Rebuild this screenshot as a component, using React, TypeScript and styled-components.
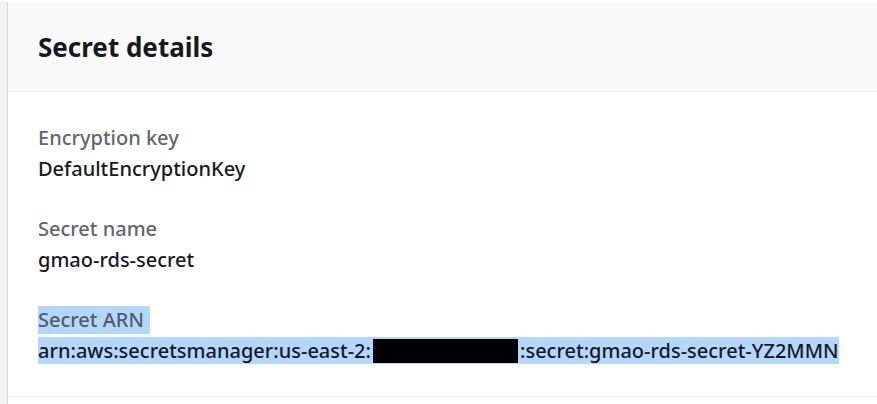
import React from "react";
import styled, { createGlobalStyle } from "styled-components";

const GlobalStyle = createGlobalStyle`
  *, *::before, *::after { box-sizing: border-box; }
  body {
    margin: 0;
    background: #ffffff;
    font-family: "Noto Sans", "Open Sans", sans-serif;
    color: #16191f;
    overflow: hidden;
  }
`;

const Page = styled.main`
  display: flex;
  min-height: 100vh;
  padding-top: 2px;
`;

const Gutter = styled.div`
  flex: 0 0 7px;
  background: #f2f3f3;
`;

const Panel = styled.section`
  flex: 1;
  min-width: 0;
  border-left: 1px solid #d5d9d9;
  background: #ffffff;
`;

const PanelHeader = styled.header`
  padding: 29px 30px 28px;
  background: #fafafa;
  border-bottom: 1px solid #e9ebeb;
`;

const Title = styled.h2`
  margin: 0;
  font-size: 26px;
  line-height: 32px;
  font-weight: 700;
`;

const Details = styled.dl`
  display: flex;
  flex-direction: column;
  gap: 33px;
  margin: 0;
  padding: 32px 30px;
  border-bottom: 1px solid #e9ebeb;
`;

const Field = styled.div`
  display: flex;
  flex-direction: column;
  align-items: flex-start;
  gap: 3px;
`;

const Label = styled.dt<{ $selected?: boolean }>`
  padding-right: ${(p) => (p.$selected ? "6px" : "0")};
  background: ${(p) => (p.$selected ? "#b3d7ff" : "transparent")};
  color: ${(p) => (p.$selected ? "#535c66" : "#5f6670")};
  font-size: 20px;
  font-weight: 500;
  line-height: 28px;
`;

const Value = styled.dd<{ $selected?: boolean }>`
  display: flex;
  align-items: center;
  margin: 0;
  background: ${(p) => (p.$selected ? "#b3d7ff" : "transparent")};
  font-size: 20px;
  font-weight: 500;
  line-height: 27px;
  white-space: nowrap;
`;

const Redaction = styled.span`
  width: 145px;
  height: 24px;
  margin: 0 2px;
  background: #000000;
`;

export default function App() {
  return (
    <>
      <GlobalStyle />
      <Page>
        <Gutter />
        <Panel>
          <PanelHeader>
            <Title>Secret details</Title>
          </PanelHeader>
          <Details>
            <Field>
              <Label>Encryption key</Label>
              <Value>DefaultEncryptionKey</Value>
            </Field>
            <Field>
              <Label>Secret name</Label>
              <Value>gmao-rds-secret</Value>
            </Field>
            <Field>
              <Label $selected>Secret ARN</Label>
              <Value $selected>
                <span>arn:aws:secretsmanager:us-east-2:</span>
                <Redaction />
                <span>:secret:gmao-rds-secret-YZ2MMN</span>
              </Value>
            </Field>
          </Details>
        </Panel>
      </Page>
    </>
  );
}
